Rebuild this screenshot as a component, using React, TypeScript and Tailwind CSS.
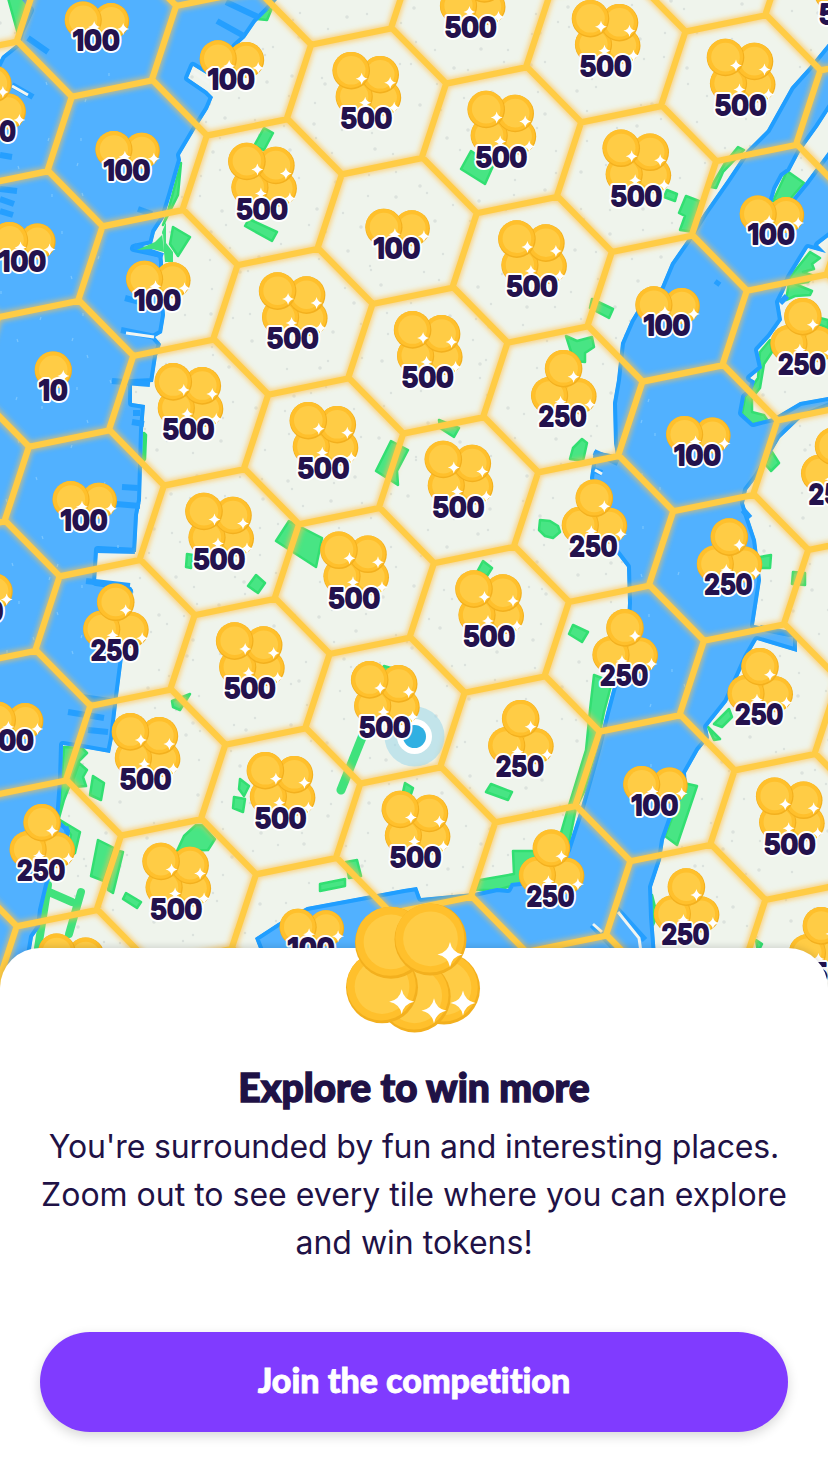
import React from "react";

type Amount = 10 | 100 | 250 | 500;

const A = [135, 38.8];
const B = [30.7, 129.6];
const CENTER = [366.6, 101.3];

const cellCenter = (i: number, j: number) => [
  CENTER[0] + A[0] * i + B[0] * j,
  CENTER[1] + A[1] * i + B[1] * j,
];

const CORNERS = [
  [-80, 18],
  [-55.5, -56.5],
  [25.5, -73],
  [79.5, -18],
];

const gridPath = (() => {
  let d = "";
  for (let j = -3; j < 11; j++) {
    for (let i = -7; i < 6; i++) {
      const [x, y] = cellCenter(i, j);
      if (x < -150 || x > 980 || y < -150 || y > 1150) continue;
      d += CORNERS.map(
        ([dx, dy], k) => `${k ? "L" : "M"}${(x + dx).toFixed(1)} ${(y + dy).toFixed(1)}`
      ).join("");
    }
  }
  return d;
})();

const TILES: [number, number, Amount][] = [
  [4, -2, 500],
  [1, -1, 500], [2, -1, 500], [3, -1, 500],
  [-2, 0, 100], [-1, 0, 100], [0, 0, 500], [1, 0, 500], [2, 0, 500], [3, 0, 100],
  [-3, 1, 250], [-2, 1, 100], [-1, 1, 500], [0, 1, 100], [1, 1, 500], [2, 1, 100], [3, 1, 250],
  [-3, 2, 100], [-2, 2, 100], [-1, 2, 500], [0, 2, 500], [1, 2, 250], [2, 2, 100], [3, 2, 250],
  [-3, 3, 10], [-2, 3, 500], [-1, 3, 500], [0, 3, 500], [1, 3, 250], [2, 3, 250],
  [-3, 4, 100], [-2, 4, 500], [-1, 4, 500], [0, 4, 500], [1, 4, 250], [2, 4, 250],
  [-4, 5, 100], [-3, 5, 250], [-2, 5, 500], [-1, 5, 500], [0, 5, 250], [1, 5, 100], [2, 5, 500],
  [-4, 6, 100], [-3, 6, 500], [-2, 6, 500], [-1, 6, 500], [0, 6, 250], [1, 6, 250], [2, 6, 250],
  [-4, 7, 250], [-3, 7, 500], [-2, 7, 100],
  [-4, 8, 500],
];

// Each coin: centre x, centre y, radius, sparkle x, sparkle y
const STACKS: Record<Amount, number[][]> = {
  10: [[0, -20, 18.7, 10, -14]],
  100: [[15, -19, 18, 27, -11], [-13, -20, 18.6, -2, -13]],
  250: [[16, -19.5, 18, 27.5, -11], [-13, -20, 18.6, -2, -14], [1, -47, 18.8, 11, -39]],
  500: [[17, -20, 18, 28, -10], [-12, -21, 18.6, -1, -15], [14, -43, 18.8, 24, -35], [-15, -47, 18.8, -4.5, -39]],
};

const LABEL_WIDTH: Record<Amount, number> = { 10: 29, 100: 47, 250: 48, 500: 52 };

function Sparkle({ x, y, s }: { x: number; y: number; s: number }) {
  const q = s * 0.16;
  return (
    <path
      d={`M${x} ${y - s}Q${x + q} ${y - q} ${x + s} ${y}Q${x + q} ${y + q} ${x} ${y + s}Q${x - q} ${y + q} ${x - s} ${y}Q${x - q} ${y - q} ${x} ${y - s}Z`}
      fill="#fff"
    />
  );
}

function Coin({ x, y, r }: { x: number; y: number; r: number }) {
  return (
    <g>
      <circle cx={x} cy={y} r={r} fill="#f3b01e" />
      <circle cx={x - r * 0.02} cy={y - r * 0.04} r={r * 0.96} fill="#ffc02c" />
      <circle cx={x} cy={y - r * 0.02} r={r * 0.76} fill="#ffcc45" />
    </g>
  );
}

function Tile({ i, j, amount }: { i: number; j: number; amount: Amount }) {
  const [cx, cy] = cellCenter(i, j);
  const w = LABEL_WIDTH[amount];
  return (
    <g transform={`translate(${(cx - 0.4).toFixed(1)} ${(cy + 16.4).toFixed(1)})`}>
      {STACKS[amount].map(([x, y, r, sx, sy], k) => (
        <g key={k}>
          <Coin x={x} y={y} r={r} />
          <Sparkle x={sx} y={sy} s={6} />
        </g>
      ))}
      <text
        x={-w / 2}
        y={10.2}
        textLength={w}
        lengthAdjust="spacingAndGlyphs"
        fontSize={27.5}
        fontWeight={600}
        strokeLinejoin="round"
      >
        <tspan className="fill-white stroke-white stroke-[6px]">{amount}</tspan>
      </text>
      <text
        x={-w / 2}
        y={10.2}
        textLength={w}
        lengthAdjust="spacingAndGlyphs"
        fontSize={27.5}
        fontWeight={600}
        strokeLinejoin="round"
        fill="#24124d"
        stroke="#24124d"
        strokeWidth={2}
        aria-hidden="true"
      >
        {amount}
      </text>
    </g>
  );
}

const WATER = [
  "M16 -8L30 10L20 32L17 44L2 56L-8 76V980H24L30 955L33 937L40 927L42 910L48 885L60 850L69 838L70 830L59 820L62 780L63 745L82 748L110 753L113 738L118 696L123 657L133 590L131 587L96 582L98 550L136 552L138 515L141 500L143 430L145 405L132 403L132 383L153 382L157 356L161 344L155 337L162 333L165 315L163 290L163 262L162 254L134 248L152 244L155 232L164 218L171 195L181 160L180 155L196 128L208 109L213 97L207 91L188 78L193 66L211 77L236 46L245 38L256 22L268 10L284 -8Z",
  "M836 34L809 67L791 87L767 130L747 150L727 180L704 213L687 240L671 263L661 287L640 305L631 320L621 343L617 380L613 403L614 443L616 455L594 451L590 478L600 520L614 550L627 567L628 603L626 640L614 683L606 713L597 750L581 807L567 850L540 880L511 883L508 889L497 888L474 893L421 898L417 887L404 889L307 907L278 923L255 938L262 956H656L653 917L652 887L661 860L664 840L671 820L687 787L686 773L699 750L709 738L707 727L727 702L747 657L757 640L797 652L797 634L754 625L761 580L756 540L747 513L744 503L747 490L757 477L780 438L801 418L840 402V394L828 397L800 402L773 418L753 423L742 413L745 397L752 391L755 381L750 378L762 368L758 350L770 337L782 320L779 302L784 292L790 277L808 248L826 253L818 245L840 228V134L828 152L805 183L792 199L772 203L776 189L783 176L790 171L800 152L818 127L840 93Z",
];

const PIERS =
  "M226 2L258 17M217 21L244 36M28 38L48 52M12 85L33 97M0 155L12 157M0 189L17 191M0 199L14 204M0 211L13 215M138 209L152 214M134 246L163 256M125 298L140 302M121 330L155 337M112 381L150 384M133 413L140 413M132 422L144 424M122 487L138 488M116 504L140 506M96 550L135 551M86 581L130 586M82 697L116 702M68 712L104 718M88 730L108 732M594 452L618 463M594 470L602 473M743 510L750 518M716 285L719 281M780 303L787 296M64 830L69 829M760 628L790 634M592 925L614 948M616 908L645 940";

const WHITE_PIERS = "M192 71L209 83M12 86L28 95M126 333L154 337M595 470L602 474M593 924L602 932M618 912L639 938L641 952";

const PARKS =
  "M8 -2L30 -2L22 18L18 34ZM32 -2H52L42 4L32 3ZM258 15L272 8L267 20L257 19ZM264 128L273 133L264 150L254 146ZM249 219L277 232L272 241L245 226ZM181 163L167 215L163 225L178 195ZM173 227L190 237L178 256L170 244ZM471 151L493 166L485 184L461 169ZM667 190L677 194L675 201L664 197ZM686 196L699 201L694 232L680 230L685 216L679 213ZM738 147L744 150L723 172L716 188L711 187L725 163ZM787 171L804 183L791 198L773 201ZM592 299L613 309L609 318L590 308ZM566 336L577 341L592 337L594 347L585 353L585 362L574 361ZM439 420L459 428L454 437L440 428ZM582 439L587 443L583 461L570 459L573 448ZM540 520L550 521L558 526L560 532L553 538L545 536L539 530ZM483 561L492 568L487 576L477 572ZM573 625L588 632L582 642L569 634ZM391 441L408 450L397 471L398 485L376 471ZM144 433L146 435L145 459L143 462ZM289 521L322 538L316 567L276 541ZM187 554L193 555L191 568L186 567ZM256 575L265 583L258 593L248 586ZM172 701L190 694L180 710L173 707ZM384 666L391 668L388 673L381 671ZM405 783L413 788L410 797L403 792ZM491 784L512 792L508 800L486 792ZM594 675L612 682L604 712L598 742L585 790L576 808L568 848L558 838L540 851L513 851L514 874L480 880L476 890L497 890L540 878L556 850L567 812L586 750L590 710ZM810 252L820 258L812 264L814 269L803 272L814 276L808 282L795 284L812 291L810 295L795 296L786 300L790 277ZM770 340L772 352L764 364L760 388L752 398L752 412L764 415L768 421L752 424L742 414L745 397L758 378L760 352ZM820 318L828 320V328L818 324ZM772 452L779 463L771 471L765 464ZM760 557L771 555L770 568L761 568ZM793 572L805 573L805 585L792 584ZM729 709L732 717L722 727L714 724ZM708 727L720 739L714 740ZM679 782L697 786L677 845L665 836L672 818ZM652 895L657 915L653 925ZM64 747L82 748L87 753L79 761L73 777L64 800L59 818ZM79 763L87 770L83 777L86 786L75 787L73 780ZM60 820L80 832L75 853L66 860L71 835ZM93 776L104 783L101 800L90 795ZM98 840L114 848L104 881L91 876ZM115 850L123 852L113 893L108 890ZM196 825H202L215 839L208 850L177 851L184 836ZM126 893L141 902L137 908L123 899ZM240 779L249 786L244 796L239 789ZM234 797L245 799L243 812L233 808ZM320 884L345 879L345 886L320 891ZM346 862L357 860L361 876L349 878ZM756 940L762 944L758 952Z";

const SPECKS = (() => {
  const out: [number, number][] = [];
  let seed = 7;
  const next = () => {
    seed = (seed * 16807) % 2147483647;
    return seed / 2147483647;
  };
  for (let y = 0; y < 980; y += 27) {
    for (let x = 0; x < 828; x += 27) {
      out.push([Math.round(x + next() * 25), Math.round(y + next() * 25)]);
    }
  }
  return out;
})();

function HexMap() {
  return (
    <svg
      viewBox="0 0 828 988"
      className="block h-[988px] w-[828px] font-['Inter',sans-serif]"
      role="img"
    >
      <defs>
        <filter id="glow" x="-5%" y="-5%" width="110%" height="110%">
          <feGaussianBlur stdDeviation="2.6" />
        </filter>
        <clipPath id="west"><path d={WATER[0]} /></clipPath>
        <clipPath id="east"><path d={WATER[1]} /></clipPath>
      </defs>
      <rect width="828" height="988" fill="#eff4ec" />
      {SPECKS.map(([x, y], k) => (
        <circle key={k} cx={x} cy={y} r={k % 3 ? 1.2 : 1.8} fill="#dce2dd" />
      ))}
      <path d={PARKS} fill="#48e584" stroke="#32df72" strokeWidth="2.5" strokeLinejoin="round" />
      <path
        d="M363 735L341 790"
        stroke="#40e27c"
        strokeWidth="9"
        strokeLinecap="round"
      />
      <path
        d="M49 892L72 902M81 892L69 934M48 885L38 948"
        fill="none"
        stroke="#40e27c"
        strokeWidth="8"
        strokeLinecap="round"
      />
      {WATER.map((d, k) => (
        <g key={k} clipPath={k ? "url(#east)" : "url(#west)"}>
          <path d={d} fill="#51b1ff" stroke="#209eff" strokeWidth="8" strokeLinejoin="round" />
        </g>
      ))}
      <path d={PIERS} fill="none" stroke="#259fff" strokeWidth="6" />
      <path d={WHITE_PIERS} fill="none" stroke="#f1f5f1" strokeWidth="3" />
      <path d="M162 232L165 262H173V252L166 243V222ZM137 250L155 242L163 234L164 252L152 249Z" fill="#40e27c" />
      <g stroke="#79c6ff" strokeWidth="1.2">
        {SPECKS.filter(
          ([x, y], k) => k % 2 === 0 && ((x < 120 && y > 70 && y < 680) || (x > 635 && x < 690 && y > 390 && y < 780))
        ).map(([x, y], k) => (
          <line key={k} x1={x} y1={y} x2={x + (k % 3) - 1} y2={y + 3} />
        ))}
      </g>
      <path d={gridPath} fill="none" stroke="#ffc04a" strokeOpacity="0.65" strokeWidth="10" filter="url(#glow)" />
      <path d={gridPath} fill="none" stroke="#ffcc45" strokeWidth="6.2" strokeLinecap="round" strokeLinejoin="round" />
      <circle cx="414.5" cy="736.5" r="30" fill="#a4d9e9" fillOpacity="0.6" />
      <circle cx="414.5" cy="736.5" r="17.5" fill="#fff" />
      <circle cx="414.5" cy="736.5" r="11.5" fill="#30b0e2" />
      {TILES.map(([i, j, amount]) => (
        <Tile key={`${i},${j}`} i={i} j={j} amount={amount} />
      ))}
    </svg>
  );
}

function CoinPile() {
  return (
    <svg
      viewBox="340 900 146 136"
      className="absolute -top-12 left-[340px] h-[136px] w-[146px]"
      aria-hidden="true"
    >
      <Coin x={444} y={988.5} r={36} />
      <Sparkle x={463} y={1003} s={12.5} />
      <Coin x={414.7} y={996.5} r={36} />
      <Sparkle x={434} y={1010.7} s={12.5} />
      <Coin x={382} y={987.3} r={36} />
      <Sparkle x={401.7} y={1001.7} s={12.5} />
      <Coin x={391} y={942.7} r={36} />
      <Coin x={430.5} y={939.5} r={36} />
      <Sparkle x={450} y={954.5} s={12.5} />
    </svg>
  );
}

export default function App() {
  return (
    <div className="h-[1472px] w-[828px] overflow-hidden bg-white text-[#1f1246]">
      <HexMap />
      <section className="relative -mt-10 flex h-[524px] flex-col items-center rounded-t-[40px] bg-white px-10 pt-[114px] shadow-[0_-2px_6px_rgba(0,0,0,0.12)]">
        <CoinPile />
        <h1 className="font-['Lato',sans-serif] text-[39px] leading-[50px] font-black whitespace-nowrap [font-variant-ligatures:none] [-webkit-text-stroke:1.4px_#1f1246]">
          Explore to win more
        </h1>
        <p className="mt-[11px] text-center font-['Inter',sans-serif] text-[32px] leading-[48px] whitespace-nowrap">
          <span className="tracking-[-0.13px]">You're surrounded by fun and interesting places.</span>
          <br />
          Zoom out to see every tile where you can explore
          <br />
          and win tokens!
        </p>
        <button className="mt-[65px] h-[100px] w-[748px] shrink-0 rounded-full bg-[#803bff] pb-1.5 font-['Lato',sans-serif] text-[34px] font-black text-white shadow-[0_4px_12px_rgba(0,0,0,0.16)] [font-variant-ligatures:none] [-webkit-text-stroke:0.8px_#fff]">
          Join the competition
        </button>
      </section>
    </div>
  );
}
